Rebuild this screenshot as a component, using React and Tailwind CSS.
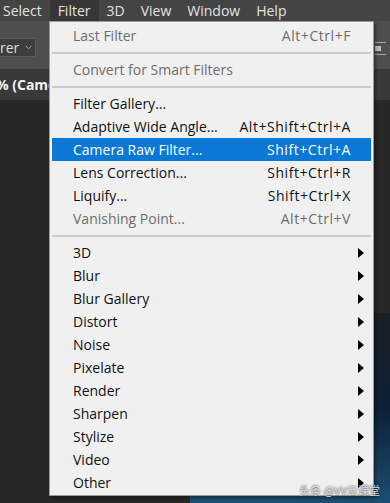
import React from "react";

const Arrow = () => (
  <svg width="6" height="10" viewBox="0 0 6 10" className="block">
    <polygon points="0,0 6,5 0,10" fill="#000" />
  </svg>
);

function Item({ label, shortcut, disabled, active, sub }) {
  const color = active ? "text-white" : disabled ? "text-[#6d6d6d]" : "text-[#111111]";
  return (
    <div
      className={`h-[23px] flex items-center justify-between pl-[21px] ${sub ? "pr-[7px]" : "pr-[20px]"} ${active ? "bg-[#0a78d4]" : ""} ${color}`}
    >
      <span className="whitespace-nowrap">{label}</span>
      {shortcut && <span className="whitespace-nowrap tracking-[0.55px]">{shortcut}</span>}
      {sub && <Arrow />}
    </div>
  );
}

const Sep = () => (
  <div className="h-[11px] flex items-center">
    <div className="h-[2px] w-full bg-[#cacaca]" />
  </div>
);

export default function App() {
  const subs = ["3D", "Blur", "Blur Gallery", "Distort", "Noise", "Pixelate", "Render", "Sharpen", "Stylize", "Video", "Other"];
  return (
    <div className="relative w-[390px] h-[503px] overflow-hidden bg-[#272727] flex flex-col font-['Open_Sans',sans-serif] text-[14px]">
      {/* menu bar */}
      <div className="h-[21px] bg-[#444444] flex items-stretch text-[#e2e2e2] shrink-0">
        <div className="px-[8px] ml-[-5px] flex items-center">Select</div>
        <div className="px-[8px] flex items-center bg-[#363636]">Filter</div>
        <div className="px-[8px] flex items-center">3D</div>
        <div className="px-[8px] flex items-center">View</div>
        <div className="px-[8px] flex items-center">Window</div>
        <div className="px-[8px] flex items-center">Help</div>
      </div>
      {/* options bar */}
      <div className="h-[48px] bg-[#4e4e4e] flex justify-between items-start shrink-0">
        <div className="mt-[17px] ml-[-6px] h-[19px] w-[42px] bg-[#3d3d3d] border border-[#5c5c5c] rounded-[2px] flex items-center pl-[5px] gap-[6px] text-[#dddddd]">
          <span className="leading-none">rer</span>
          <svg width="7" height="5" viewBox="0 0 7 5">
            <path d="M0.5 0.8 L3.5 3.8 L6.5 0.8" stroke="#aaaaaa" fill="none" strokeWidth="1" />
          </svg>
        </div>
        <div className="mt-[20px] mr-[2px]">
          <svg width="13" height="14" viewBox="0 0 13 14" className="block">
            <rect x="0" y="1" width="11" height="1" fill="#a8a8a8" />
            <rect x="0" y="5" width="6" height="5" fill="#bdbdbd" />
            <rect x="0" y="13" width="11" height="1" fill="#a8a8a8" />
          </svg>
        </div>
      </div>
      {/* tab row */}
      <div className="h-[31px] bg-[#393939] flex items-center shrink-0">
        <span className="ml-[-4px] font-bold text-[#f2f2f2] whitespace-nowrap">% (Came</span>
      </div>
      {/* canvas */}
      <div className="flex-1 flex justify-end items-end">
        <div className="w-[200px] h-[190px] bg-gradient-to-b from-[#1b1f25] via-[#0d2036] to-[#1b4f73]" />
      </div>

      {/* dropdown menu */}
      <div className="absolute left-[49px] top-[21px] w-[325px] bg-[#f0f0f0] border border-[#9a9a9a] px-[2px] pt-[2px] pb-[1px] shadow-[2px_2px_3px_rgba(0,0,0,0.35)]">
        <Item label="Last Filter" shortcut="Alt+Ctrl+F" disabled />
        <Sep />
        <Item label="Convert for Smart Filters" disabled />
        <Sep />
        <Item label="Filter Gallery..." />
        <Item label="Adaptive Wide Angle..." shortcut="Alt+Shift+Ctrl+A" />
        <Item label="Camera Raw Filter..." shortcut="Shift+Ctrl+A" active />
        <Item label="Lens Correction..." shortcut="Shift+Ctrl+R" />
        <Item label="Liquify..." shortcut="Shift+Ctrl+X" />
        <Item label="Vanishing Point..." shortcut="Alt+Ctrl+V" disabled />
        <Sep />
        {subs.map((s) => (
          <Item key={s} label={s} sub />
        ))}
      </div>

      {/* watermark */}
      <div className="absolute right-[10px] bottom-[7px] text-[11px] leading-none text-[#e0e0e0] [text-shadow:0_0_2px_rgba(0,0,0,0.9)] font-['Noto_Sans_CJK_SC',sans-serif] whitespace-nowrap">
        头条 @VV云课堂
      </div>
    </div>
  );
}
